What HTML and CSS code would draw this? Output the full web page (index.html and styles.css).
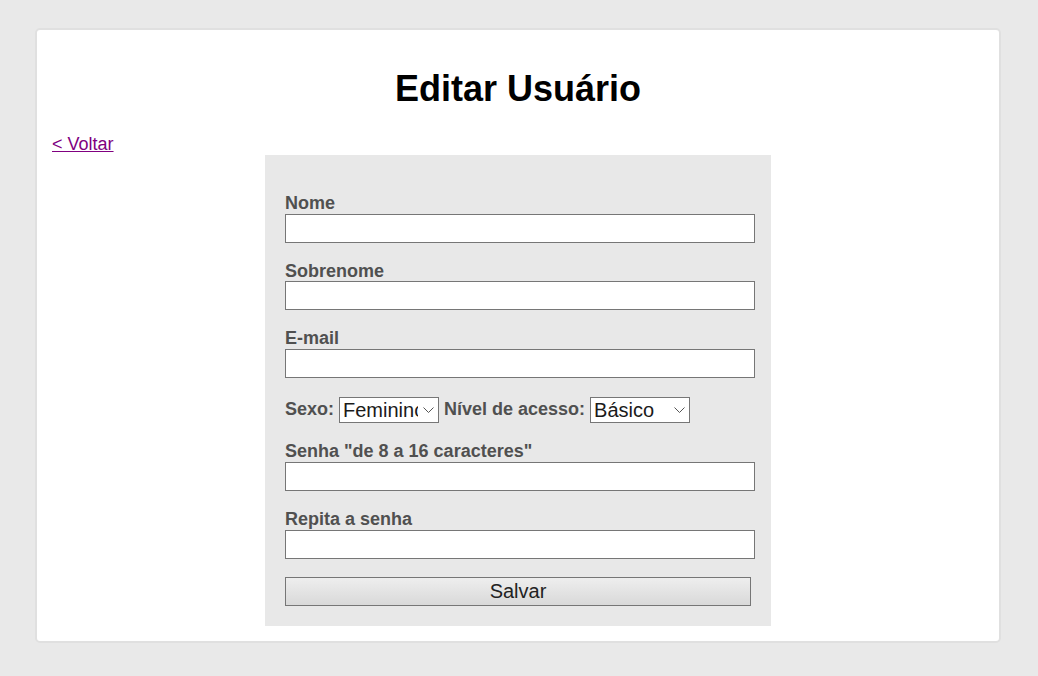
FILE: index.html
```html
<!DOCTYPE html>
<html lang="pt-BR">
<head>
<meta charset="utf-8">
<title>Editar Usuário</title>
<link rel="stylesheet" href="styles.css">
</head>
<body>
<div class="card">
  <h1 class="title">Editar Usuário</h1>
  <a class="back" href="#">&lt; Voltar</a>
  <form class="form">
    <div class="group">
      <label class="label">Nome</label>
      <input class="field" type="text">
    </div>
    <div class="group">
      <label class="label">Sobrenome</label>
      <input class="field" type="text">
    </div>
    <div class="group">
      <label class="label">E-mail</label>
      <input class="field" type="text">
    </div>
    <div class="group row">
      <label class="label inline">Sexo:</label>
      <span class="select-wrap">
        <select class="select"><option>Feminino</option><option>Masculino</option></select>
        <svg class="chev" width="11" height="6" viewBox="0 0 11 6"><path d="M0.5 0.5 L5.5 5.5 L10.5 0.5" fill="none" stroke="#555" stroke-width="1"/></svg>
      </span>
      <label class="label inline">Nível de acesso:</label>
      <span class="select-wrap">
        <select class="select"><option>Básico</option><option>Administrador</option></select>
        <svg class="chev" width="11" height="6" viewBox="0 0 11 6"><path d="M0.5 0.5 L5.5 5.5 L10.5 0.5" fill="none" stroke="#555" stroke-width="1"/></svg>
      </span>
    </div>
    <div class="group">
      <label class="label">Senha "de 8 a 16 caracteres"</label>
      <input class="field" type="password">
    </div>
    <div class="group">
      <label class="label">Repita a senha</label>
      <input class="field" type="password">
    </div>
    <div class="group">
      <button class="btn" type="button">Salvar</button>
    </div>
  </form>
</div>
</body>
</html>
```
FILE: styles.css
```css
html, body {
  margin: 0;
  padding: 0;
  background: #e9e9e9;
  font-family: "Liberation Sans", Arial, sans-serif;
}
body {
  padding-top: 28px;
}
.card {
  box-sizing: border-box;
  width: 966px;
  margin-left: 35px;
  background: #ffffff;
  border: 2px solid #e0e0e0;
  border-radius: 5px;
  padding: 15px;
}
.title {
  margin: 23px 0 25px;
  font-size: 36px;
  line-height: 41.4px;
  font-weight: bold;
  text-align: center;
  color: #000;
}
.back {
  display: block;
  width: max-content;
  font-size: 18px;
  line-height: 20.6px;
  color: #800080;
  text-decoration: underline;
}
.form {
  box-sizing: border-box;
  width: 506px;
  margin: 0 auto;
  padding: 20px 20px 20px;
  background: #e8e8e8;
}
.group {
  margin-top: 18px;
}
.label {
  display: block;
  font-size: 18px;
  line-height: 20.7px;
  font-weight: bold;
  color: #505050;
}
.label.inline {
  display: inline;
}
.field {
  display: block;
  box-sizing: border-box;
  width: 470px;
  height: 29px;
  margin: 0;
  padding: 1px 4px;
  border: 1px solid #767676;
  border-radius: 0;
  background: #fff;
  font-family: "Liberation Sans", Arial, sans-serif;
  font-size: 18px;
}
.row {
  display: flex;
  align-items: center;
  gap: 5px;
  height: 27px;
}
.select-wrap {
  position: relative;
  display: block;
  width: 100px;
  height: 26px;
}
.select {
  -webkit-appearance: none;
  appearance: none;
  box-sizing: border-box;
  width: 100px;
  height: 26px;
  margin: 0;
  padding: 0 20px 0 3px;
  border: 1px solid #767676;
  border-radius: 0;
  background: #fff;
  color: #1a1a1a;
  font-family: "Liberation Sans", Arial, sans-serif;
  font-size: 20px;
  line-height: 24px;
}
.chev {
  position: absolute;
  right: 5px;
  top: 10px;
  pointer-events: none;
}
.btn {
  display: block;
  box-sizing: border-box;
  width: 466px;
  height: 29px;
  margin: 0;
  padding: 0;
  border: 1px solid #767676;
  border-radius: 0;
  background: linear-gradient(#eeeeee, #d9d9d9);
  color: #222;
  font-family: "Liberation Sans", Arial, sans-serif;
  font-size: 20px;
}
```
